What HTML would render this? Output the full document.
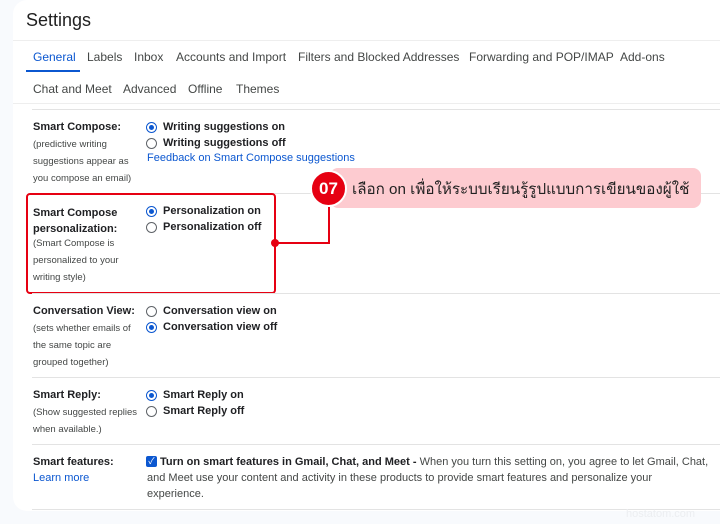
<!DOCTYPE html>
<html><head><meta charset="utf-8"><style>
*{margin:0;padding:0;box-sizing:border-box}
body{width:720px;height:524px;background:#f8fafd;font-family:"Liberation Sans","Noto Sans CJK SC",sans-serif;position:relative;overflow:hidden;color:#202124}
.card{position:absolute;left:13px;top:0;width:720px;height:511px;background:#fff;border-radius:14px}
.a{position:absolute;white-space:nowrap}
.hl{position:absolute;height:1px;background:#e3e3e3}
.tab{font-size:12px;color:#444746}
.lb{font-size:11px;font-weight:bold;color:#202124}
.sm{font-size:9.5px;color:#444746;line-height:17px}
.op{font-size:11px;font-weight:bold;color:#202124}
.r{position:absolute;width:11px;height:11px;border-radius:50%;border:1.3px solid #5f6368}
.r.on{border-color:#0b57d0}
.r.on:after{content:"";position:absolute;left:2px;top:2px;width:5px;height:5px;border-radius:50%;background:#0b57d0}
.lk{color:#0b57d0;font-size:11px}
</style></head><body>
<div class="card"></div>
<div class="a" style="left:26px;top:10px;font-size:18px;color:#1f1f1f">Settings</div>
<div class="hl" style="left:13px;width:707px;top:40px;background:#eee"></div>
<div class="a tab" style="left:33px;top:50px;color:#0b57d0">General</div>
<div style="position:absolute;left:26px;top:70px;width:54px;height:2px;background:#0b57d0"></div>
<div class="a tab" style="left:87px;top:50px">Labels</div>
<div class="a tab" style="left:134px;top:50px">Inbox</div>
<div class="a tab" style="left:176px;top:50px">Accounts and Import</div>
<div class="a tab" style="left:298px;top:50px">Filters and Blocked Addresses</div>
<div class="a tab" style="left:469px;top:50px">Forwarding and POP/IMAP</div>
<div class="a tab" style="left:620px;top:50px">Add-ons</div>
<div class="a tab" style="left:33px;top:82px">Chat and Meet</div>
<div class="a tab" style="left:123px;top:82px">Advanced</div>
<div class="a tab" style="left:188px;top:82px">Offline</div>
<div class="a tab" style="left:236px;top:82px">Themes</div>
<div class="hl" style="left:13px;width:707px;top:103px;background:#eee"></div>
<div class="hl" style="left:32px;width:688px;top:109px"></div>

<div class="a lb" style="left:33px;top:121px">Smart Compose:</div>
<div class="a sm" style="left:33px;top:136px">(predictive writing<br>suggestions appear as<br>you compose an email)</div>
<div class="r on" style="left:146px;top:122px"></div><div class="a op" style="left:163px;top:121px">Writing suggestions on</div>
<div class="r" style="left:146px;top:138px"></div><div class="a op" style="left:163px;top:137px">Writing suggestions off</div>
<div class="a lk" style="left:147px;top:152px">Feedback on Smart Compose suggestions</div>
<div class="hl" style="left:32px;width:688px;top:193px"></div>

<div class="a lb" style="left:33px;top:205px;line-height:16px">Smart Compose<br>personalization:</div>
<div class="a sm" style="left:33px;top:235px">(Smart Compose is<br>personalized to your<br>writing style)</div>
<div class="r on" style="left:146px;top:206px"></div><div class="a op" style="left:163px;top:205px">Personalization on</div>
<div class="r" style="left:146px;top:222px"></div><div class="a op" style="left:163px;top:221px">Personalization off</div>
<div style="position:absolute;left:26px;top:193px;width:250px;height:101px;border:2px solid #e60012;border-radius:4px"></div>
<div class="hl" style="left:32px;width:688px;top:293px"></div>

<div class="a lb" style="left:33px;top:305px">Conversation View:</div>
<div class="a sm" style="left:33px;top:320px">(sets whether emails of<br>the same topic are<br>grouped together)</div>
<div class="r" style="left:146px;top:306px"></div><div class="a op" style="left:163px;top:305px">Conversation view on</div>
<div class="r on" style="left:146px;top:322px"></div><div class="a op" style="left:163px;top:321px">Conversation view off</div>
<div class="hl" style="left:32px;width:688px;top:377px"></div>

<div class="a lb" style="left:33px;top:389px">Smart Reply:</div>
<div class="a sm" style="left:33px;top:404px">(Show suggested replies<br>when available.)</div>
<div class="r on" style="left:146px;top:390px"></div><div class="a op" style="left:163px;top:389px">Smart Reply on</div>
<div class="r" style="left:146px;top:406px"></div><div class="a op" style="left:163px;top:405px">Smart Reply off</div>
<div class="hl" style="left:32px;width:688px;top:444px"></div>

<div class="a lb" style="left:33px;top:456px">Smart features:</div>
<div class="a lk" style="left:33px;top:472px">Learn more</div>
<div style="position:absolute;left:146px;top:456px;width:11px;height:11px;background:#0b57d0;border-radius:2px;color:#fff;font-size:9px;line-height:11px;text-align:center">✓</div>
<div class="a" style="left:147px;top:454px;width:562px;white-space:normal;font-size:11px;line-height:16px;color:#444746;text-indent:13px"><b style="color:#202124">Turn on smart features in Gmail, Chat, and Meet -</b> When you turn this setting on, you agree to let Gmail, Chat, and Meet use your content and activity in these products to provide smart features and personalize your experience.</div>
<div class="hl" style="left:32px;width:688px;top:509px"></div>
<div class="a" style="left:626px;top:508px;font-size:11px;color:#eceef1">hostatom.com</div>

<!-- callout -->
<div style="position:absolute;left:330px;top:168px;width:371px;height:40px;background:#fdcbd0;border-radius:8px"></div>
<div style="position:absolute;left:310px;top:170px;width:37px;height:37px;border-radius:50%;background:#e60012;border:2px solid #fff;color:#fff;font-weight:bold;font-size:17px;line-height:33px;text-align:center">07</div>
<div class="a" style="left:352px;top:177px;font-size:15.2px;color:#222">เลือก on เพื่อให้ระบบเรียนรู้รูปแบบการเขียนของผู้ใช้</div>
<div style="position:absolute;left:328px;top:207px;width:2px;height:37px;background:#e60012"></div>
<div style="position:absolute;left:275px;top:242px;width:55px;height:2px;background:#e60012"></div>
<div style="position:absolute;left:271px;top:239px;width:8px;height:8px;border-radius:50%;background:#e60012"></div>
</body></html>
